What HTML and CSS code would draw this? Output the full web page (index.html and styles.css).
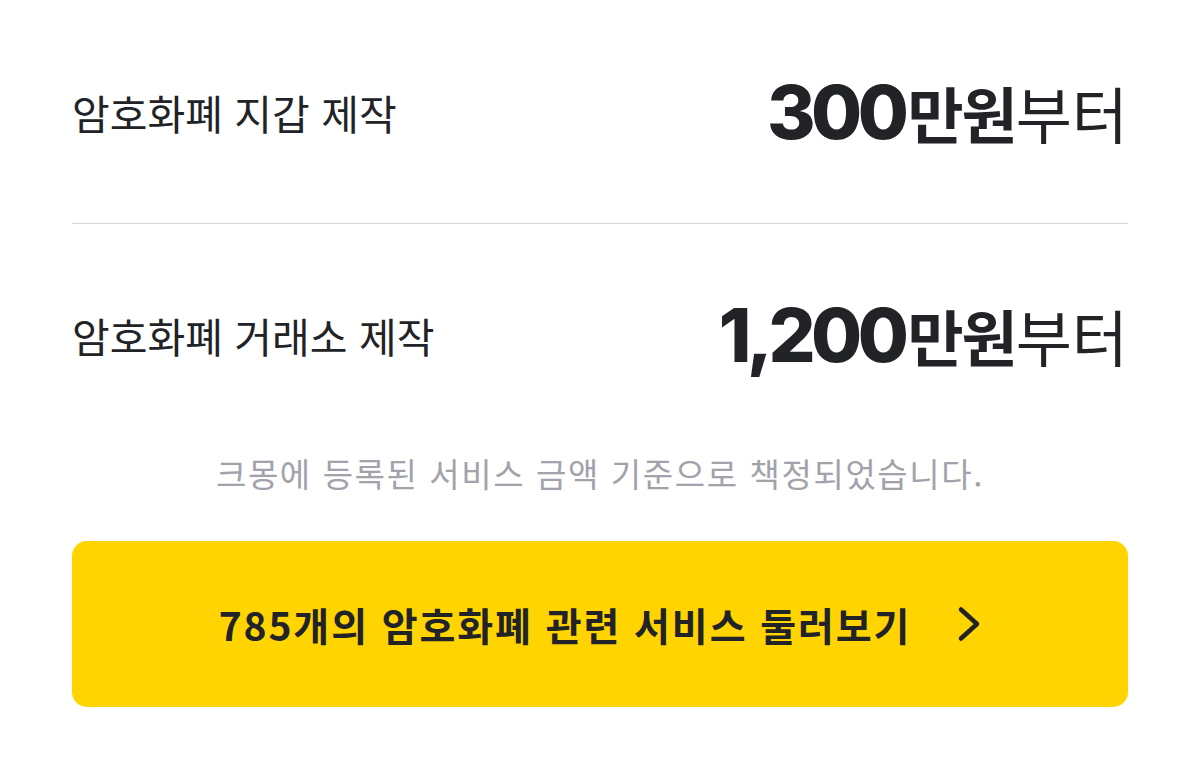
FILE: index.html
```html
<!DOCTYPE html>
<html lang="ko">
<head>
<meta charset="utf-8">
<link rel="stylesheet" href="styles.css">
</head>
<body>
<main class="page">
  <section class="row row-first">
    <div class="label">암호화폐 지갑 제작</div>
    <div class="price"><span class="num">300</span><strong class="unit">만원</strong><span class="suffix">부터</span></div>
  </section>
  <section class="row">
    <div class="label">암호화폐 거래소 제작</div>
    <div class="price"><span class="num">1,200</span><strong class="unit">만원</strong><span class="suffix">부터</span></div>
  </section>
  <p class="note">크몽에 등록된 서비스 금액 기준으로 책정되었습니다.</p>
  <a class="cta" href="#">
    <span class="cta-text">785개의 암호화폐 관련 서비스 둘러보기</span>
    <svg class="chevron" width="24" height="36" viewBox="0 0 24 36" aria-hidden="true"><path d="M4 3.5 L20 18 L4 32.5" fill="none" stroke="#222326" stroke-width="4.5" stroke-linecap="round" stroke-linejoin="round"/></svg>
  </a>
</main>
</body>
</html>
```
FILE: styles.css
```css
* { box-sizing: border-box; }
html, body { margin: 0; padding: 0; background: #fff; }
body {
  font-family: "Noto Sans CJK KR", "Noto Sans", sans-serif;
  color: #222326;
}
.page {
  padding: 0 72px;
  display: flex;
  flex-direction: column;
}
.row {
  height: 222px;
  display: flex;
  align-items: center;
  justify-content: space-between;
}
.row-first { border-bottom: 1px solid #d5d5d8; height: 224px; }
.label {
  font-size: 41px;
  font-weight: 400;
  letter-spacing: 0;
}
.price {
  font-size: 61px;
  line-height: 1;
  white-space: nowrap;
}
.num {
  font-family: "Inter", "Noto Sans CJK KR", sans-serif;
  font-weight: 800;
  font-size: 74px;
  letter-spacing: -4.5px;
  margin-right: 3px;
}
.unit { font-weight: 700; letter-spacing: -2px; }
.suffix { font-weight: 400; }
.note {
  margin: 0;
  text-align: center;
  font-size: 33px;
  color: #a2a2ab;
  letter-spacing: 1.6px;
  line-height: 54px;
}
.cta {
  margin-top: 41px;
  height: 166px;
  border-radius: 15px;
  background: #ffd400;
  display: flex;
  align-items: center;
  justify-content: center;
  gap: 46px;
  text-decoration: none;
  color: #222326;
}
.cta-text {
  font-size: 39px;
  font-weight: 700;
  letter-spacing: 1.9px;
}
.chevron { display: block; }
```
